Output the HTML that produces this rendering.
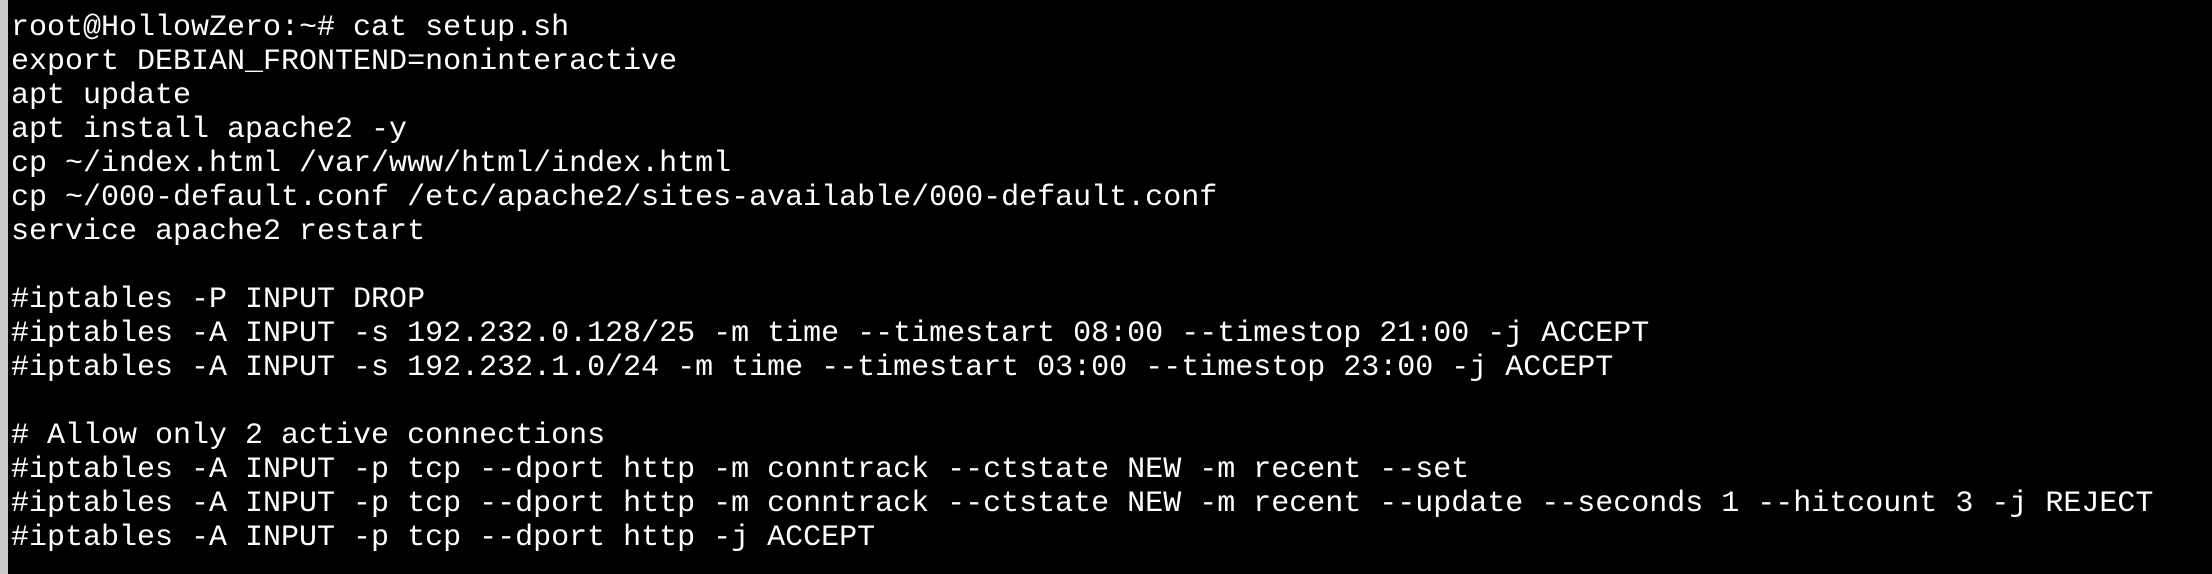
<!DOCTYPE html>
<html><head><meta charset="utf-8"><style>
html,body{margin:0;padding:0;background:#000;}
body{width:2212px;height:574px;overflow:hidden;position:relative;}
.bar{position:absolute;left:0;top:0;width:8px;height:574px;background:#c9c9c9;}
pre{position:absolute;left:11px;top:11px;margin:0;font-family:"Liberation Mono",monospace;font-size:30px;line-height:34px;color:#fff;white-space:pre;}
</style></head><body><div class="bar"></div><pre>root@HollowZero:~# cat setup.sh
export DEBIAN_FRONTEND=noninteractive
apt update
apt install apache2 -y
cp ~/index.html /var/www/html/index.html
cp ~/000-default.conf /etc/apache2/sites-available/000-default.conf
service apache2 restart

#iptables -P INPUT DROP
#iptables -A INPUT -s 192.232.0.128/25 -m time --timestart 08:00 --timestop 21:00 -j ACCEPT
#iptables -A INPUT -s 192.232.1.0/24 -m time --timestart 03:00 --timestop 23:00 -j ACCEPT

# Allow only 2 active connections
#iptables -A INPUT -p tcp --dport http -m conntrack --ctstate NEW -m recent --set
#iptables -A INPUT -p tcp --dport http -m conntrack --ctstate NEW -m recent --update --seconds 1 --hitcount 3 -j REJECT
#iptables -A INPUT -p tcp --dport http -j ACCEPT
</pre></body></html>
